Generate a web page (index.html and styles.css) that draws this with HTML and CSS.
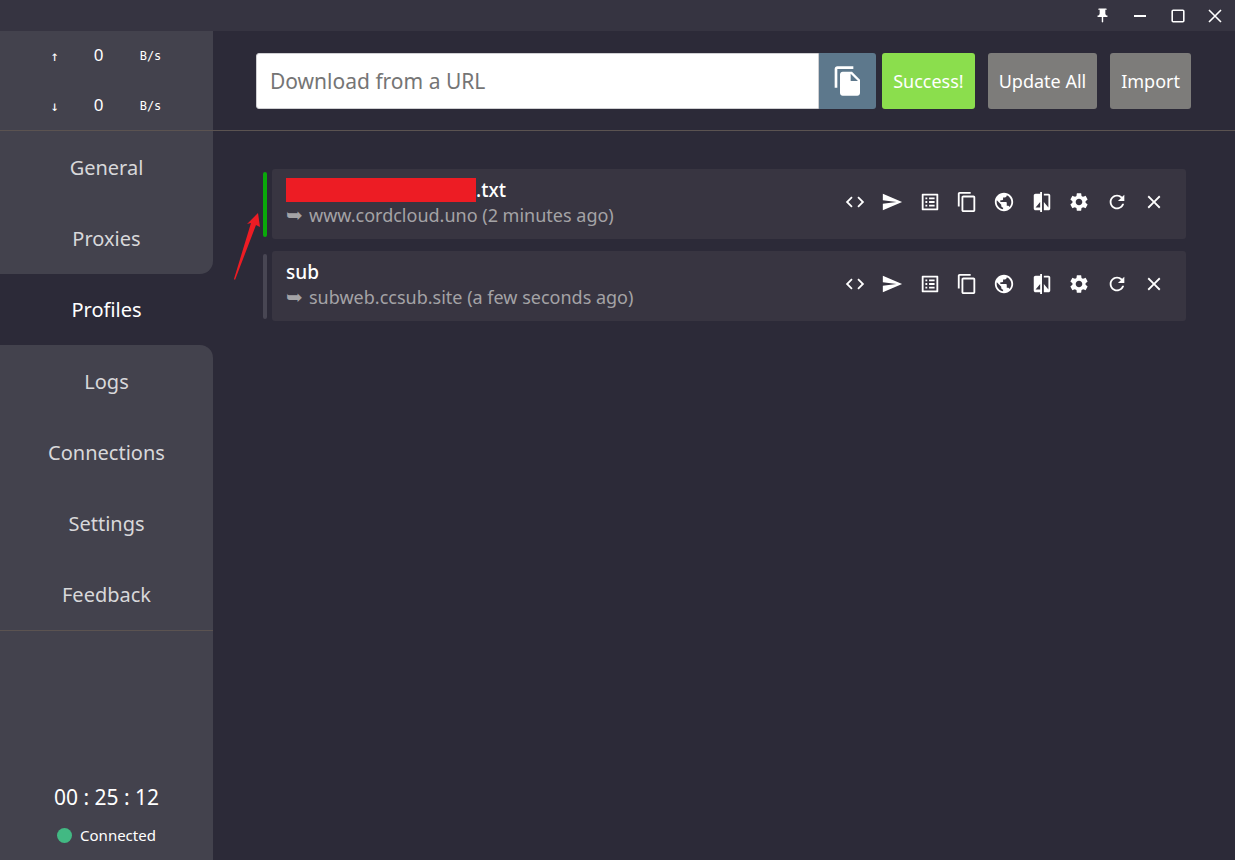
FILE: index.html
```
<!DOCTYPE html>
<html lang="en">
<head>
    <meta charset="UTF-8">
    <meta name="viewport" content="width=device-width, initial-scale=1.0">
    <title>Profiles</title>
    <link rel="stylesheet" href="styles.css">
</head>
<body>
    <!-- icons shared by the profile rows -->
    <svg class="sprite" aria-hidden="true">
        <symbol id="i-code" viewBox="0 0 24 24"><path d="M9.4 16.6L4.8 12l4.6-4.6L8 6l-6 6 6 6 1.4-1.4zm5.2 0l4.6-4.6-4.6-4.6L16 6l6 6-6 6-1.4-1.4z"/></symbol>
        <symbol id="i-send" viewBox="0 0 24 24"><path d="M2.01 21L23 12 2.01 3 2 10l15 2-15 2z"/></symbol>
        <symbol id="i-list" viewBox="0 0 24 24"><path d="M19 5v14H5V5h14m1.1-2H3.9c-.5 0-.9.4-.9.9v16.2c0 .4.4.9.9.9h16.2c.4 0 .9-.5.9-.9V3.9c0-.5-.5-.9-.9-.9zM11 7h6v2h-6V7zm0 4h6v2h-6v-2zm0 4h6v2h-6zM7 7h2v2H7zm0 4h2v2H7zm0 4h2v2H7z"/></symbol>
        <symbol id="i-copy" viewBox="0 0 24 24"><path d="M16 1H4c-1.1 0-2 .9-2 2v14h2V3h12V1zm3 4H8c-1.1 0-2 .9-2 2v14c0 1.1.9 2 2 2h11c1.1 0 2-.9 2-2V7c0-1.1-.9-2-2-2zm0 16H8V7h11v14z"/></symbol>
        <symbol id="i-globe" viewBox="0 0 24 24"><path d="M12 2C6.48 2 2 6.48 2 12s4.48 10 10 10 10-4.48 10-10S17.52 2 12 2zm-1 17.93c-3.95-.49-7-3.85-7-7.93 0-.62.08-1.21.21-1.79L9 15v1c0 1.1.9 2 2 2v1.93zm6.9-2.54c-.26-.81-1-1.39-1.9-1.39h-1v-3c0-.55-.45-1-1-1H8v-2h2c.55 0 1-.45 1-1V7h2c1.1 0 2-.9 2-2v-.41c2.93 1.19 5 4.06 5 7.41 0 2.08-.8 3.97-2.1 5.39z"/></symbol>
        <symbol id="i-compare" viewBox="0 0 24 24"><path d="M10 3H5c-1.1 0-2 .9-2 2v14c0 1.1.9 2 2 2h5v2h2V1h-2v2zm0 15H5l5-6v6zm9-15h-5v2h5v13l-5-6v9h5c1.1 0 2-.9 2-2V5c0-1.1-.9-2-2-2z"/></symbol>
        <symbol id="i-gear" viewBox="0 0 24 24"><path d="M19.14 12.94c.04-.3.06-.61.06-.94 0-.32-.02-.64-.07-.94l2.03-1.58c.18-.14.23-.41.12-.61l-1.92-3.32c-.12-.22-.37-.29-.59-.22l-2.39.96c-.5-.38-1.03-.7-1.62-.94l-.36-2.54c-.04-.24-.24-.41-.48-.41h-3.84c-.24 0-.43.17-.47.41l-.36 2.54c-.59.24-1.13.57-1.62.94l-2.39-.96c-.22-.08-.47 0-.59.22L2.74 8.87c-.12.21-.08.47.12.61l2.03 1.58c-.05.3-.09.63-.09.94s.02.64.07.94l-2.03 1.58c-.18.14-.23.41-.12.61l1.92 3.32c.12.22.37.29.59.22l2.39-.96c.5.38 1.03.7 1.62.94l.36 2.54c.05.24.24.41.48.41h3.84c.24 0 .44-.17.47-.41l.36-2.54c.59-.24 1.13-.56 1.62-.94l2.39.96c.22.08.47 0 .59-.22l1.92-3.32c.12-.22.07-.47-.12-.61l-2.01-1.58zM12 15.6c-1.98 0-3.6-1.62-3.6-3.6s1.62-3.6 3.6-3.6 3.6 1.62 3.6 3.6-1.62 3.6-3.6 3.6z"/></symbol>
        <symbol id="i-refresh" viewBox="0 0 24 24"><path d="M17.65 6.35C16.2 4.9 14.21 4 12 4c-4.42 0-7.99 3.58-7.99 8s3.57 8 7.99 8c3.73 0 6.84-2.55 7.73-6h-2.08c-.82 2.33-3.04 4-5.65 4-3.31 0-6-2.69-6-6s2.69-6 6-6c1.66 0 3.14.69 4.22 1.78L13 11h7V4l-2.35 2.35z"/></symbol>
        <symbol id="i-close" viewBox="0 0 24 24"><path d="M19 6.41L17.59 5 12 10.59 6.41 5 5 6.41 10.59 12 5 17.59 6.41 19 12 13.41 17.59 19 19 17.59 13.41 12z"/></symbol>
    </svg>

    <header class="titlebar">
        <button aria-label="Pin"><svg width="17" height="17" viewBox="0 0 24 24"><path d="M16 9V4h1c.55 0 1-.45 1-1s-.45-1-1-1H7c-.55 0-1 .45-1 1s.45 1 1 1h1v5c0 1.66-1.34 3-3 3v2h5.97v7l1 1 1-1v-7H19v-2c-1.66 0-3-1.34-3-3z"/></svg></button>
        <button aria-label="Minimize"><svg width="14" height="14" viewBox="0 0 14 14"><path d="M1 6h12v2H1z"/></svg></button>
        <button aria-label="Maximize"><svg width="14" height="14" viewBox="0 0 14 14"><rect class="line" x="1.2" y="1.2" width="11.6" height="11.6" rx="1"/></svg></button>
        <button aria-label="Close"><svg width="14" height="14" viewBox="0 0 14 14"><path class="line" d="M1 1l12 12M13 1L1 13"/></svg></button>
    </header>

    <div class="app">
        <aside class="sidebar">
            <div class="traffic">
                <div class="rate"><span class="arrow">↑</span><span class="num">0</span><span class="unit">B/s</span></div>
                <div class="rate"><span class="arrow">↓</span><span class="num">0</span><span class="unit">B/s</span></div>
            </div>
            <nav class="menu">
                <a href="#">General</a>
                <a href="#" class="before">Proxies</a>
                <a href="#" class="active">Profiles</a>
                <a href="#" class="after">Logs</a>
                <a href="#">Connections</a>
                <a href="#">Settings</a>
                <a href="#">Feedback</a>
            </nav>
            <div class="status">
                <div class="timer">00 : 25 : 12</div>
                <div class="connected"><span class="dot"></span>Connected</div>
            </div>
        </aside>

        <main class="content">
            <form class="toolbar">
                <div class="url-box">
                    <input type="text" placeholder="Download from a URL" aria-label="Download from a URL">
                    <button type="button" class="paste" aria-label="Paste"><svg width="32" height="32" viewBox="0 0 24 24"><path d="M16 1H4c-1.1 0-2 .9-2 2v14h2V3h12V1zm-1 4l6 6v10c0 1.1-.9 2-2 2H7.99C6.89 23 6 22.1 6 21l.01-14c0-1.1.89-2 1.99-2h7zm-1 7h5.5L14 6.5V12z"/></svg></button>
                </div>
                <button type="button" class="btn success">Success!</button>
                <button type="button" class="btn">Update All</button>
                <button type="button" class="btn">Import</button>
            </form>

            <ul class="profiles">
                <li class="profile">
                    <span class="bar selected"></span>
                    <div class="card">
                        <div class="info">
                            <h2><span class="redacted"></span>.txt</h2>
                            <p><span class="turn">➥</span>www.cordcloud.uno (2 minutes ago)</p>
                        </div>
                        <div class="actions">
                            <button aria-label="Edit as text"><svg><use href="#i-code"/></svg></button>
                            <button aria-label="Edit rules"><svg><use href="#i-send"/></svg></button>
                            <button aria-label="Edit list"><svg><use href="#i-list"/></svg></button>
                            <button aria-label="Duplicate"><svg><use href="#i-copy"/></svg></button>
                            <button aria-label="Open page"><svg><use href="#i-globe"/></svg></button>
                            <button aria-label="Compare"><svg><use href="#i-compare"/></svg></button>
                            <button aria-label="Settings"><svg><use href="#i-gear"/></svg></button>
                            <button aria-label="Update"><svg><use href="#i-refresh"/></svg></button>
                            <button aria-label="Delete"><svg><use href="#i-close"/></svg></button>
                        </div>
                    </div>
                    <svg class="pointer" width="28" height="70" viewBox="0 0 28 70" aria-hidden="true"><path d="M25 2L27 16L23 14L2 69L1 68L18 12L14 13Z"/></svg>
                </li>
                <li class="profile">
                    <span class="bar"></span>
                    <div class="card">
                        <div class="info">
                            <h2>sub</h2>
                            <p><span class="turn">➥</span>subweb.ccsub.site (a few seconds ago)</p>
                        </div>
                        <div class="actions">
                            <button aria-label="Edit as text"><svg><use href="#i-code"/></svg></button>
                            <button aria-label="Edit rules"><svg><use href="#i-send"/></svg></button>
                            <button aria-label="Edit list"><svg><use href="#i-list"/></svg></button>
                            <button aria-label="Duplicate"><svg><use href="#i-copy"/></svg></button>
                            <button aria-label="Open page"><svg><use href="#i-globe"/></svg></button>
                            <button aria-label="Compare"><svg><use href="#i-compare"/></svg></button>
                            <button aria-label="Settings"><svg><use href="#i-gear"/></svg></button>
                            <button aria-label="Update"><svg><use href="#i-refresh"/></svg></button>
                            <button aria-label="Delete"><svg><use href="#i-close"/></svg></button>
                        </div>
                    </div>
                </li>
            </ul>
        </main>
    </div>
</body>
</html>
```
FILE: styles.css
```
* {
    margin: 0;
    padding: 0;
    box-sizing: border-box;
}

body {
    display: flex;
    flex-direction: column;
    min-height: 100vh;
    background-color: #2c2a38;
    color: white;
    font-family: "Noto Sans", "Open Sans", sans-serif;
}

button {
    display: flex;
    align-items: center;
    justify-content: center;
    border: none;
    background: none;
    color: white;
    font-family: inherit;
    cursor: pointer;
}

svg {
    fill: white;
}

.sprite {
    display: none;
}

.line {
    fill: none;
    stroke: white;
    stroke-width: 1.6;
}

/* title bar */
.titlebar {
    display: grid;
    grid-template-columns: repeat(4, 1fr);
    width: 100%;
    height: 31px;
    padding-left: calc(100% - 151px);
    padding-right: 1px;
    background-color: #363441;
}

.app {
    display: flex;
    flex: 1;
}

/* sidebar */
.sidebar {
    display: flex;
    flex-direction: column;
    width: 213px;
}

.traffic {
    height: 100px;
    background-color: #43424d;
    border-bottom: 1px solid #5b5351;
}

.rate {
    display: grid;
    grid-template-columns: 36px 52px 52px;
    justify-content: center;
    align-items: center;
    height: 50px;
    text-align: center;
}

.arrow,
.unit {
    font-family: "DejaVu Sans Mono", monospace;
    font-size: 12px;
}

.arrow {
    font-size: 14px;
}

.num {
    font-size: 17px;
    line-height: 24px;
    padding-bottom: 2px;
}

.menu {
    display: flex;
    flex-direction: column;
}

.menu a {
    height: 71px;
    line-height: 71px;
    background-color: #43424d;
    color: #d8d8da;
    font-size: 20px;
    text-align: center;
    text-decoration: none;
}

.menu a:first-child,
.menu a.after {
    height: 72px;
    padding-top: 1px;
}

.menu a.active {
    background-color: #2c2a38;
    color: white;
}

.menu a.before {
    border-bottom-right-radius: 13px;
}

.menu a.after {
    border-top-right-radius: 13px;
}

.status {
    display: flex;
    flex: 1;
    flex-direction: column;
    align-items: center;
    justify-content: flex-end;
    gap: 12px;
    padding-bottom: 13px;
    background-color: #43424d;
    border-top: 1px solid #5b5351;
}

.timer {
    font-size: 21px;
    line-height: 28px;
}

.connected {
    display: flex;
    align-items: center;
    gap: 8px;
    font-size: 15px;
    line-height: 24px;
}

.dot {
    width: 15px;
    height: 15px;
    border-radius: 50%;
    background-color: #42b983;
}

/* content */
.content {
    flex: 1;
}

.toolbar {
    display: flex;
    gap: 13px;
    height: 100px;
    padding: 22px 44px 21px 43px;
    border-bottom: 1px solid #5b5351;
}

.url-box {
    display: flex;
    flex: 1;
    margin-right: -7px;
}

.url-box input {
    flex: 1;
    min-width: 0;
    padding: 0 13px;
    border: 1px solid #cfcfd2;
    border-radius: 3px 0 0 3px;
    background-color: white;
    font-family: inherit;
    font-size: 21px;
}

.url-box input::placeholder {
    color: #757575;
}

.paste {
    width: 57px;
    border-radius: 0 3px 3px 0;
    background-color: #5d788c;
}

.btn {
    padding: 0 11px;
    border-radius: 3px;
    background-color: #7d7c7a;
    font-size: 18px;
    white-space: nowrap;
}

.btn.success {
    background-color: #8bde4d;
}

/* profile list */
.profiles {
    display: flex;
    flex-direction: column;
    gap: 12px;
    padding: 38px 49px 38px 50px;
    list-style: none;
}

.profile {
    position: relative;
    display: flex;
    align-items: center;
    gap: 5px;
}

.bar {
    width: 4px;
    height: 65px;
    border-radius: 2px;
    background-color: #484653;
}

.bar.selected {
    background-color: #0aa80a;
}

.card {
    display: flex;
    flex: 1;
    justify-content: space-between;
    height: 70px;
    padding: 8px 13px 13px 14px;
    border-radius: 3px;
    background-color: #383541;
}

.info h2 {
    display: flex;
    align-items: center;
    height: 26px;
    font-size: 19px;
    font-weight: 500;
}

.info p {
    display: flex;
    align-items: center;
    height: 24px;
    color: #a4a3a6;
    font-size: 18px;
}

.turn {
    width: 23px;
    font-family: "DejaVu Sans", sans-serif;
    font-size: 20px;
}

.redacted {
    width: 190px;
    height: 24px;
    background-color: #ed1c24;
}

.actions {
    display: grid;
    grid-template-columns: repeat(9, 1fr);
    width: 337px;
}

.actions svg {
    width: 22px;
    height: 22px;
}

/* red arrow drawn over the page, aimed at the selected bar */
.pointer {
    position: absolute;
    top: 42px;
    left: -30px;
    fill: #ed1c24;
}
```
